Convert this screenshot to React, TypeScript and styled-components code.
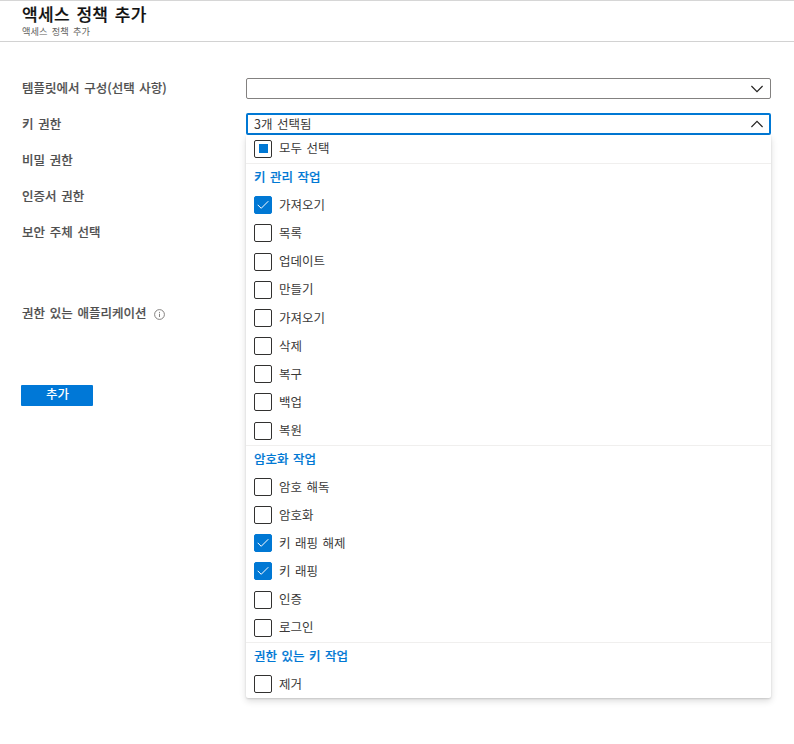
import React from "react";
import styled, { createGlobalStyle, css } from "styled-components";

const GlobalStyle = createGlobalStyle`
  * { box-sizing: border-box; }
  body {
    margin: 0;
    background: #fff;
    color: #3b3a39;
    font-family: "Noto Sans CJK KR", sans-serif;
    font-size: 12.5px;
    word-spacing: 1px;
  }
`;

const Page = styled.main`
  width: 794px;
  height: 744px;
  overflow: hidden;
  border-top: 1px solid #d6d6d6;
`;

const Header = styled.header`
  height: 41px;
  padding: 2px 0 0 22px;
  border-bottom: 1px solid #d2d2d2;
`;

const Title = styled.h1`
  margin: 0;
  font-size: 17px;
  line-height: 22px;
  font-weight: 500;
  letter-spacing: 0.3px;
  word-spacing: 1.5px;
  color: #111;
  -webkit-text-stroke: 0.2px #111;
`;

const Subtitle = styled.div`
  font-size: 9.2px;
  line-height: 13px;
  word-spacing: 1.8px;
  color: #605e5c;
`;

const Form = styled.div`
  display: grid;
  grid-template-columns: 225px 525px;
  padding: 36px 0 0 21px;
`;

const Labels = styled.div`
  display: flex;
  flex-direction: column;
`;

const Label = styled.label<{ $gap?: number }>`
  display: flex;
  align-items: center;
  height: 20px;
  margin: 0 0 ${(p) => p.$gap ?? 16}px 1px;
  padding-bottom: 2px;
  font-weight: 500;
  word-spacing: 1.2px;
  color: #505050;
  -webkit-text-stroke: 0.15px #505050;
  white-space: nowrap;

  svg { margin: 4px 0 0 7.5px; }
`;

const AddButton = styled.button`
  width: 72px;
  height: 21px;
  padding: 0 0 4px 1px;
  border: 0;
  border-radius: 1px;
  background: #0078d7;
  color: #fff;
  font: inherit;
  font-weight: 500;
  line-height: 17px;
`;

const Fields = styled.div`
  display: flex;
  flex-direction: column;
`;

const Select = styled.div<{ $open?: boolean }>`
  display: flex;
  align-items: center;
  justify-content: space-between;
  height: 21px;
  padding: 0 7px;
  border: 1px solid #838180;
  border-radius: 2px;
  line-height: 18px;

  ${(p) =>
    p.$open &&
    css`
      height: 22px;
      margin-top: 14px;
      padding: 0 6px;
      border: 2px solid #0078d4;
    `}
`;

const Menu = styled.div`
  height: 563.45px;
  display: grid;
  grid-template-rows: repeat(20, 28.172px);
  border-radius: 0 0 2px 2px;
  box-shadow: 0 3px 7px rgba(0, 0, 0, 0.14), 0 1px 2px rgba(0, 0, 0, 0.13);
`;

const Option = styled.div`
  display: flex;
  align-items: center;
  gap: 7px;
  padding: 0 0 0.43px 8px;
`;

const GroupTitle = styled.div`
  border-top: 1px solid #f0efee;
  padding-left: 8px;
  line-height: 26px;
  font-weight: 500;
  color: #0078d4;
  -webkit-text-stroke: 0.15px #0078d4;
`;

const Box = styled.span<{ $state?: State }>`
  display: grid;
  place-items: center;
  flex: none;
  width: 18px;
  height: 18px;
  border: 1px solid ${(p) => (p.$state === "on" ? "#0078d4" : "#323130")};
  border-radius: 2px;
  background: ${(p) => (p.$state === "on" ? "#0078d4" : "#fff")};
`;

const Partial = styled.span`
  width: 9px;
  height: 9px;
  background: #0078d4;
`;

const Text = styled.span`
  padding-bottom: 0.8px;
  line-height: 18px;
`;

type State = "on" | "off" | "some";
type Item = { text: string; state?: State; heading?: boolean };

const items: Item[] = [
  { text: "모두 선택", state: "some" },
  { text: "키 관리 작업", heading: true },
  { text: "가져오기", state: "on" },
  { text: "목록" },
  { text: "업데이트" },
  { text: "만들기" },
  { text: "가져오기" },
  { text: "삭제" },
  { text: "복구" },
  { text: "백업" },
  { text: "복원" },
  { text: "암호화 작업", heading: true },
  { text: "암호 해독" },
  { text: "암호화" },
  { text: "키 래핑 해제", state: "on" },
  { text: "키 래핑", state: "on" },
  { text: "인증" },
  { text: "로그인" },
  { text: "권한 있는 키 작업", heading: true },
  { text: "제거" },
];

const Chevron = ({ up }: { up?: boolean }) => (
  <svg width="12" height="8" viewBox="0 0 12 8" fill="none" stroke="#252423" strokeWidth="1.2">
    <path d={up ? "M.4 7 6 1.4 11.6 7" : "M.4 1 6 6.6 11.6 1"} />
  </svg>
);

const Check = () => (
  <svg width="12" height="10" viewBox="0 0 12 10" fill="none" stroke="#fff" strokeWidth="1">
    <path d="M.7 4.8 4.2 8.3 11.3 1.2" />
  </svg>
);

const Info = () => (
  <svg width="11" height="11" viewBox="0 0 11 11" fill="none" stroke="#767472" strokeWidth=".9">
    <circle cx="5.5" cy="5.5" r="4.9" />
    <path d="M5.5 4.7V8M5.5 2.9v1" />
  </svg>
);

export default function App() {
  return (
    <Page lang="ko">
      <GlobalStyle />
      <Header>
        <Title>액세스 정책 추가</Title>
        <Subtitle>액세스 정책 추가</Subtitle>
      </Header>
      <Form>
        <Labels>
          <Label>템플릿에서 구성(선택 사항)</Label>
          <Label>키 권한</Label>
          <Label>비밀 권한</Label>
          <Label>인증서 권한</Label>
          <Label $gap={61}>보안 주체 선택</Label>
          <Label $gap={62}>
            권한 있는 애플리케이션
            <Info />
          </Label>
          <AddButton>추가</AddButton>
        </Labels>
        <Fields>
          <Select>
            <span />
            <Chevron />
          </Select>
          <Select $open>
            <span>3개 선택됨</span>
            <Chevron up />
          </Select>
          <Menu>
            {items.map((item, i) =>
              item.heading ? (
                <GroupTitle key={i}>{item.text}</GroupTitle>
              ) : (
                <Option key={i}>
                  <Box $state={item.state}>
                    {item.state === "on" && <Check />}
                    {item.state === "some" && <Partial />}
                  </Box>
                  <Text>{item.text}</Text>
                </Option>
              )
            )}
          </Menu>
        </Fields>
      </Form>
    </Page>
  );
}
